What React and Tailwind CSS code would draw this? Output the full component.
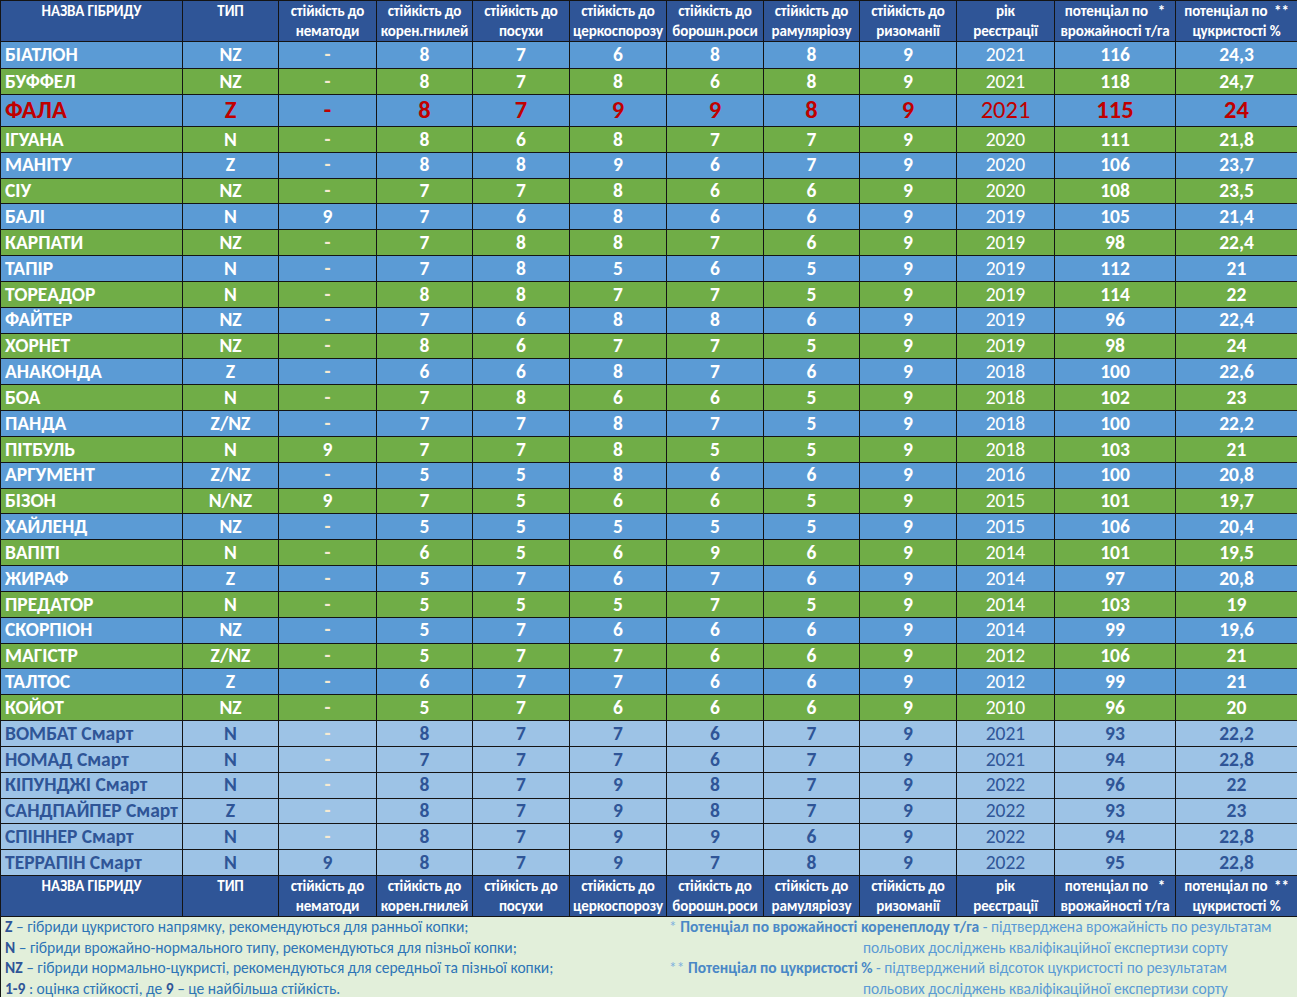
const FONT = { fontFamily: '"Carlito", "Open Sans", "Liberation Sans", sans-serif' };

const widths = [182, 96, 98, 96, 97, 97, 97, 96, 97, 98, 121, 122];

// name, type, nematodes, root rot, drought, cercospora, mildew, ramularia, rhizomania, year, yield, sugar
const rows = [
  ["БІАТЛОН", "NZ", "-", 8, 7, 6, 8, 8, 9, 2021, 116, "24,3"],
  ["БУФФЕЛ", "NZ", "-", 8, 7, 8, 6, 8, 9, 2021, 118, "24,7"],
  ["ФАЛА", "Z", "-", 8, 7, 9, 9, 8, 9, 2021, 115, "24"],
  ["ІГУАНА", "N", "-", 8, 6, 8, 7, 7, 9, 2020, 111, "21,8"],
  ["МАНІТУ", "Z", "-", 8, 8, 9, 6, 7, 9, 2020, 106, "23,7"],
  ["СІУ", "NZ", "-", 7, 7, 8, 6, 6, 9, 2020, 108, "23,5"],
  ["БАЛІ", "N", 9, 7, 6, 8, 6, 6, 9, 2019, 105, "21,4"],
  ["КАРПАТИ", "NZ", "-", 7, 8, 8, 7, 6, 9, 2019, 98, "22,4"],
  ["ТАПІР", "N", "-", 7, 8, 5, 6, 5, 9, 2019, 112, "21"],
  ["ТОРЕАДОР", "N", "-", 8, 8, 7, 7, 5, 9, 2019, 114, "22"],
  ["ФАЙТЕР", "NZ", "-", 7, 6, 8, 8, 6, 9, 2019, 96, "22,4"],
  ["ХОРНЕТ", "NZ", "-", 8, 6, 7, 7, 5, 9, 2019, 98, "24"],
  ["АНАКОНДА", "Z", "-", 6, 6, 8, 7, 6, 9, 2018, 100, "22,6"],
  ["БОА", "N", "-", 7, 8, 6, 6, 5, 9, 2018, 102, "23"],
  ["ПАНДА", "Z/NZ", "-", 7, 7, 8, 7, 5, 9, 2018, 100, "22,2"],
  ["ПІТБУЛЬ", "N", 9, 7, 7, 8, 5, 5, 9, 2018, 103, "21"],
  ["АРГУМЕНТ", "Z/NZ", "-", 5, 5, 8, 6, 6, 9, 2016, 100, "20,8"],
  ["БІЗОН", "N/NZ", 9, 7, 5, 6, 6, 5, 9, 2015, 101, "19,7"],
  ["ХАЙЛЕНД", "NZ", "-", 5, 5, 5, 5, 5, 9, 2015, 106, "20,4"],
  ["ВАПІТІ", "N", "-", 6, 5, 6, 9, 6, 9, 2014, 101, "19,5"],
  ["ЖИРАФ", "Z", "-", 5, 7, 6, 7, 6, 9, 2014, 97, "20,8"],
  ["ПРЕДАТОР", "N", "-", 5, 5, 5, 7, 5, 9, 2014, 103, "19"],
  ["СКОРПІОН", "NZ", "-", 5, 7, 6, 6, 6, 9, 2014, 99, "19,6"],
  ["МАГІСТР", "Z/NZ", "-", 5, 7, 7, 6, 6, 9, 2012, 106, "21"],
  ["ТАЛТОС", "Z", "-", 6, 7, 7, 6, 6, 9, 2012, 99, "21"],
  ["КОЙОТ", "NZ", "-", 5, 7, 6, 6, 6, 9, 2010, 96, "20"],
  ["ВОМБАТ Смарт", "N", "-", 8, 7, 7, 6, 7, 9, 2021, 93, "22,2"],
  ["НОМАД Смарт", "N", "-", 7, 7, 7, 6, 7, 9, 2021, 94, "22,8"],
  ["КІПУНДЖІ Смарт", "N", "-", 8, 7, 9, 8, 7, 9, 2022, 96, "22"],
  ["САНДПАЙПЕР Смарт", "Z", "-", 8, 7, 9, 8, 7, 9, 2022, 93, "23"],
  ["СПІННЕР Смарт", "N", "-", 8, 7, 9, 9, 6, 9, 2022, 94, "22,8"],
  ["ТЕРРАПІН Смарт", "N", 9, 8, 7, 9, 7, 8, 9, 2022, 95, "22,8"],
];

const headers = [
  ["НАЗВА ГІБРИДУ", ""],
  ["ТИП", ""],
  ["стійкість до", "нематоди"],
  ["стійкість до", "корен.гнилей"],
  ["стійкість до", "посухи"],
  ["стійкість до", "церкоспорозу"],
  ["стійкість до", "борошн.роси"],
  ["стійкість до", "рамуляріозу"],
  ["стійкість до", "ризоманії"],
  ["рік", "реєстрації"],
  ["потенціал по\u00a0\u00a0\u00a0*", "врожайності т/га"],
  ["потенціал по\u00a0\u00a0**", "цукристості %"],
];

function HeaderRow() {
  return (
    <tr className="h-[40px] bg-[#2f5597] text-white">
      {headers.map(([a, b], i) => (
        <th
          key={i}
          className="border border-[#141414] px-0 pt-[1px] align-top text-[15px] font-bold leading-[19.5px] tracking-[-0.1px] whitespace-nowrap"
        >
          <div>{a}</div>
          <div>{b}</div>
        </th>
      ))}
    </tr>
  );
}

function DataRow({ row, index }) {
  const smart = index >= 26;
  const fala = index === 2;
  const bg = smart ? "bg-[#9dc3e6]" : index % 2 === 0 ? "bg-[#5b9bd5]" : "bg-[#70ad47]";
  const text = fala ? "text-[#c00000]" : smart ? "text-[#2f5597]" : "text-white";
  const h = fala ? "h-[32px]" : index < 2 ? "h-[26.5px]" : "h-[25.83px]";
  const size = fala ? "text-[24.5px]" : "text-[19.5px]";

  return (
    <tr className={`${bg} ${text} ${h}`}>
      {row.map((v, i) => {
        const dash = v === "-";
        const year = i === 9;
        return (
          <td
            key={i}
            className={`border border-[#141414] p-0 leading-none whitespace-nowrap ${size} ${
              i === 0 ? "pl-[4px] text-left" : "text-center"
            } ${year ? "font-normal" : "font-bold"} ${dash && !fala ? "text-[#f6ead2]" : ""}`}
          >
            {v}
          </td>
        );
      })}
    </tr>
  );
}

export default function App() {
  return (
    <div className="w-[1297px] h-[997px] overflow-hidden bg-white" style={FONT}>
      <table className="w-[1297px] table-fixed border-collapse">
        <colgroup>
          {widths.map((w, i) => (
            <col key={i} style={{ width: w }} />
          ))}
        </colgroup>
        <thead>
          <HeaderRow />
        </thead>
        <tbody>
          {rows.map((r, i) => (
            <DataRow key={r[0]} row={r} index={i} />
          ))}
          <HeaderRow />
          <tr className="h-[83px] bg-[#e2efda]">
            <td colSpan={12} className="border border-[#141414] p-0 align-top">
              <div className="flex text-[15.5px] leading-[20.5px] text-[#2e75b6] whitespace-nowrap">
                {/* legend */}
                <div className="w-[668px] pl-[4px]">
                  <div>
                    <b className="text-[#2f5597]">Z</b> – гібриди цукристого напрямку, рекомендуються для ранньої копки;
                  </div>
                  <div>
                    <b className="text-[#2f5597]">N</b> – гібриди врожайно-нормального типу, рекомендуються для пізньої копки;
                  </div>
                  <div>
                    <b className="text-[#2f5597]">NZ</b> – гібриди нормально-цукристі, рекомендуються для середньої та пізньої копки;
                  </div>
                  <div>
                    <b className="text-[#2f5597]">1-9</b> : оцінка стійкості, де <b className="text-[#2f5597]">9</b> – це найбільша стійкість.
                  </div>
                </div>
                {/* notes */}
                <div className="flex-1 text-[#5b9bd5]">
                  <div>
                    <span className="text-[#7fb1df]">*</span>{" "}
                    <b className="text-[#4a88c6]">Потенціал по врожайності коренеплоду т/га</b> - підтверджена врожайність по результатам
                  </div>
                  <div className="pl-[194px]">польових досліджень кваліфікаційної експертизи сорту</div>
                  <div>
                    <span className="text-[#7fb1df]">**</span>{" "}
                    <b className="text-[#4a88c6]">Потенціал по цукристості %</b> - підтверджений відсоток цукристості по результатам
                  </div>
                  <div className="pl-[194px]">польових досліджень кваліфікаційної експертизи сорту</div>
                </div>
              </div>
            </td>
          </tr>
        </tbody>
      </table>
    </div>
  );
}
